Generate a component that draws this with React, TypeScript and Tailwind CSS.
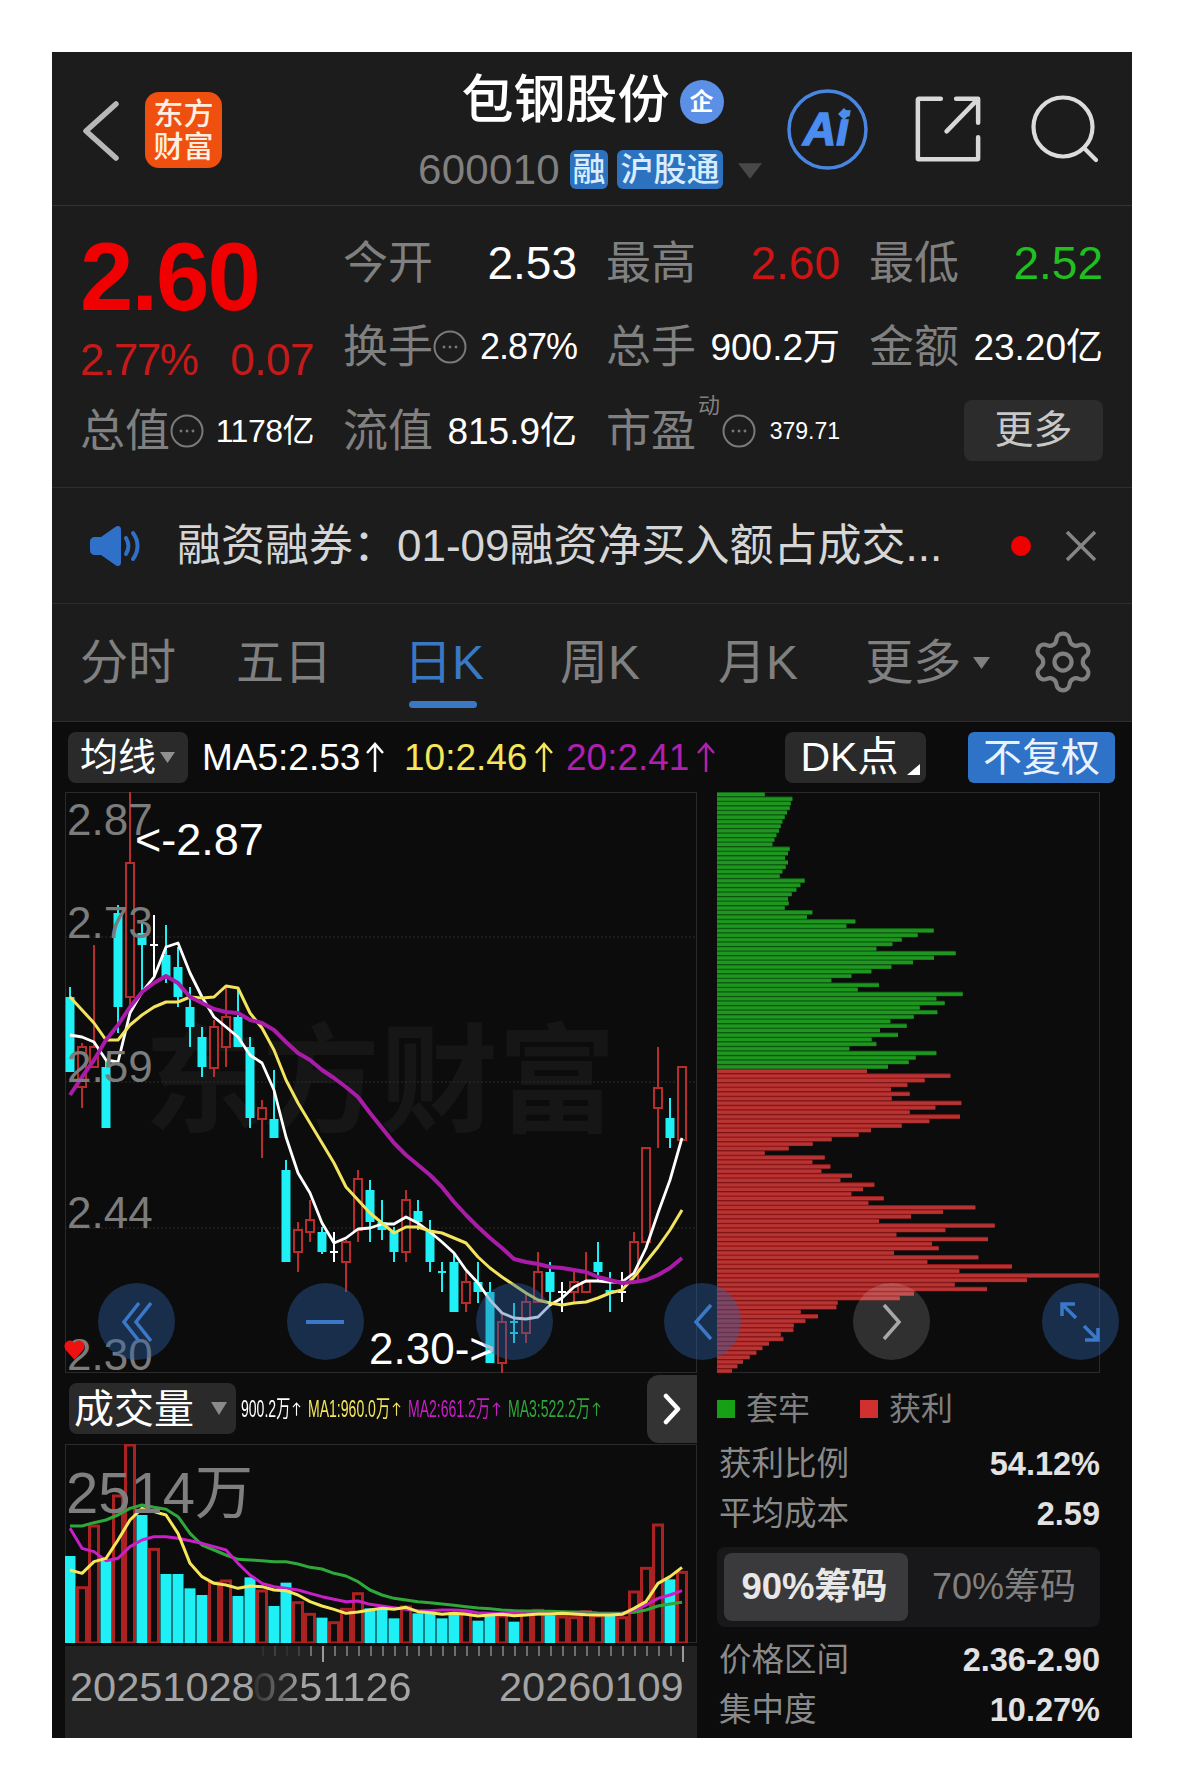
import { Settings } from 'lucide-react'

type Candle = [string, number, number, number, number]

// color, wick top, body top, body bottom, wick bottom (page y). x = 70 + 12 * i
const candles: Candle[] = [
    ['c', 987, 997, 1072, 1072], ['r', 1043, 1047, 1087, 1108], ['r', 945, 1047, 1067, 1067], ['c', 1060, 1067, 1128, 1128],
    ['c', 905, 913, 1007, 1033], ['r', 792, 863, 997, 1013], ['c', 920, 933, 945, 993], ['w', 915, 945, 945, 977],
    ['c', 925, 955, 977, 983], ['c', 947, 967, 997, 1007], ['c', 987, 1007, 1027, 1047], ['c', 1027, 1037, 1067, 1077],
    ['r', 1020, 1027, 1068, 1077], ['r', 987, 1017, 1047, 1067], ['c', 987, 1017, 1047, 1047], ['c', 1037, 1047, 1118, 1128],
    ['r', 1100, 1108, 1119, 1158], ['c', 1070, 1119, 1138, 1138], ['c', 1160, 1170, 1262, 1262], ['r', 1222, 1230, 1252, 1272],
    ['r', 1200, 1220, 1232, 1242], ['c', 1227, 1232, 1252, 1254], ['w', 1232, 1252, 1252, 1262], ['r', 1240, 1242, 1262, 1292],
    ['r', 1170, 1179, 1230, 1242], ['c', 1180, 1190, 1222, 1242], ['c', 1200, 1222, 1230, 1240], ['c', 1227, 1232, 1252, 1262],
    ['r', 1190, 1200, 1252, 1262], ['c', 1200, 1211, 1222, 1230], ['c', 1220, 1230, 1262, 1272], ['d', 1262, 1272, 1272, 1292],
    ['c', 1253, 1262, 1312, 1312], ['r', 1272, 1282, 1303, 1312], ['c', 1262, 1282, 1292, 1303], ['c', 1282, 1292, 1363, 1363],
    ['r', 1312, 1322, 1363, 1373], ['d', 1303, 1322, 1333, 1343], ['r', 1292, 1302, 1333, 1343], ['r', 1252, 1272, 1302, 1302],
    ['c', 1262, 1272, 1292, 1303], ['w', 1282, 1292, 1305, 1312], ['r', 1272, 1282, 1292, 1303], ['r', 1252, 1282, 1292, 1293],
    ['c', 1242, 1262, 1272, 1282], ['c', 1272, 1290, 1293, 1312], ['w', 1272, 1282, 1292, 1302], ['r', 1232, 1242, 1282, 1282],
    ['r', 1148, 1148, 1242, 1242], ['r', 1047, 1088, 1108, 1148], ['c', 1098, 1118, 1138, 1148], ['r', 1067, 1067, 1140, 1140],
]

const ma5 = [1035, 1037, 1042, 1060, 1062, 1013, 992, 977, 947, 943, 973, 997, 1017, 1027, 1037, 1055, 1063, 1090, 1137, 1173, 1193, 1223, 1243, 1238, 1229, 1228, 1224, 1224, 1217, 1223, 1232, 1242, 1253, 1270, 1283, 1300, 1313, 1318, 1319, 1317, 1305, 1298, 1287, 1281, 1281, 1282, 1282, 1273, 1248, 1213, 1180, 1138]
const ma10 = [997, 1010, 1023, 1040, 1040, 1025, 1015, 1007, 1002, 1002, 997, 998, 997, 986, 988, 1013, 1028, 1050, 1080, 1103, 1123, 1143, 1163, 1187, 1200, 1213, 1223, 1233, 1227, 1227, 1231, 1233, 1238, 1243, 1257, 1268, 1277, 1285, 1293, 1300, 1303, 1305, 1303, 1302, 1298, 1293, 1290, 1277, 1262, 1247, 1230, 1210]
const ma20 = [1095, 1077, 1060, 1040, 1025, 1007, 992, 983, 976, 983, 997, 1003, 1009, 1012, 1013, 1020, 1023, 1030, 1042, 1053, 1060, 1070, 1078, 1087, 1097, 1113, 1128, 1143, 1155, 1165, 1175, 1187, 1202, 1215, 1227, 1238, 1248, 1259, 1262, 1264, 1267, 1268, 1270, 1272, 1277, 1280, 1283, 1282, 1280, 1275, 1268, 1258]

// bar tops as read off the volume pane
const volumes: [string, number][] = [
    ['c', 558], ['r', 650], ['r', 465], ['c', 570], ['r', 375], ['r', 222], ['c', 435], ['r', 535], ['c', 612], ['c', 612], ['c', 655], ['c', 675], ['r', 635],
    ['r', 630], ['c', 678], ['c', 622], ['r', 660], ['c', 708], ['c', 638], ['r', 695], ['r', 730], ['c', 743], ['r', 755], ['r', 715], ['r', 668], ['c', 715],
    ['c', 720], ['c', 745], ['r', 708], ['c', 730], ['c', 730], ['c', 745], ['c', 728], ['r', 725], ['c', 752], ['c', 735], ['r', 735], ['c', 755], ['r', 720],
    ['r', 718], ['c', 730], ['r', 738], ['r', 740], ['r', 722], ['r', 735], ['c', 738], ['r', 740], ['r', 663], ['r', 592], ['r', 462], ['c', 628], ['r', 604],
]
const volMa1 = [600, 610, 575, 565, 510, 450, 415, 425, 435, 490, 580, 620, 640, 645, 655, 648, 650, 660, 662, 675, 695, 708, 718, 730, 726, 720, 715, 718, 712, 725, 728, 733, 730, 733, 738, 735, 733, 737, 735, 732, 732, 730, 732, 734, 735, 735, 733, 715, 695, 640, 620, 592]
const volMa2 = [475, 535, 545, 572, 565, 530, 510, 500, 500, 505, 512, 520, 530, 540, 580, 615, 640, 650, 655, 660, 670, 680, 688, 695, 693, 703, 708, 713, 718, 722, 722, 720, 720, 722, 728, 730, 730, 730, 732, 732, 732, 732, 732, 733, 733, 733, 732, 720, 705, 685, 675, 662]
const volMa3 = [468, 468, 458, 450, 435, 415, 405, 412, 418, 440, 490, 525, 540, 555, 568, 570, 572, 575, 575, 582, 592, 597, 610, 618, 635, 660, 675, 685, 690, 695, 698, 702, 706, 710, 714, 716, 720, 722, 724, 724, 724, 725, 726, 727, 729, 730, 729, 727, 720, 708, 702, 697]

const chipGreen = [195, 278, 273, 270, 262, 255, 248, 243, 238, 230, 224, 218, 270, 265, 256, 265, 258, 248, 240, 315, 302, 290, 276, 265, 267, 255, 338, 322, 467, 440, 702, 654, 606, 578, 530, 768, 703, 640, 575, 515, 455, 395, 538, 474, 789, 710, 735, 660, 713, 642, 572, 621, 541, 595, 516, 530, 449, 710, 648, 627, 565]
const chipRed = [502, 752, 675, 623, 574, 630, 576, 785, 707, 630, 781, 689, 606, 514, 477, 396, 339, 267, 195, 375, 338, 392, 365, 457, 422, 524, 490, 455, 552, 506, 827, 730, 634, 538, 885, 737, 590, 865, 697, 717, 583, 836, 683, 937, 779, 1197, 982, 765, 862, 643, 600, 414, 410, 303, 355, 317, 282, 281, 243, 251, 208, 188, 170, 150, 130, 113, 97]

const candleX = (i: number) => 70 + 12 * i
const toPoints = (ys: number[]) => ys.map((y, i) => `${candleX(i)},${y}`).join(' ')
const volY = (v: number) => 1370 + v / 3

function PriceChart() {
    return (
        <svg className="absolute -left-px -top-px h-[581px] w-[632px]" viewBox="65 792 632 581">
            <g stroke="#2c2c2c" strokeWidth="1" strokeDasharray="2 2">
                <line x1="65" x2="697" y1="937" y2="937" />
                <line x1="65" x2="697" y1="1082" y2="1082" />
                <line x1="65" x2="697" y1="1228" y2="1228" />
            </g>
            {candles.map(([c, wt, bt, bb, wb], i) => {
                const x = candleX(i)
                if (c === 'w' || c === 'd') {
                    const color = c === 'w' ? '#ffffff' : '#1ff0f5'
                    return (
                        <g key={i} stroke={color} strokeWidth="2">
                            <line x1={x} x2={x} y1={wt} y2={wb} />
                            <line x1={x - 4} x2={x + 4} y1={bt} y2={bt} />
                            <line x1={x - 4} x2={x + 4} y1={bb} y2={bb} />
                        </g>
                    )
                }
                if (c === 'c') {
                    return (
                        <g key={i}>
                            <line x1={x} x2={x} y1={wt} y2={wb} stroke="#1ff0f5" strokeWidth="2" />
                            <rect x={x - 4.5} y={bt} width="9" height={Math.max(bb - bt, 2)} fill="#1ff0f5" />
                        </g>
                    )
                }
                return (
                    <g key={i}>
                        <line x1={x} x2={x} y1={wt} y2={bt} stroke="#b82c2c" strokeWidth="2" />
                        <line x1={x} x2={x} y1={bb} y2={wb} stroke="#b82c2c" strokeWidth="2" />
                        <rect x={x - 4} y={bt} width="8" height={bb - bt} fill="#0c0c0c" stroke="#b82c2c" strokeWidth="2" />
                    </g>
                )
            })}
            <polyline points={toPoints(ma5)} fill="none" stroke="#ffffff" strokeWidth="2.8" strokeLinejoin="round" />
            <polyline points={toPoints(ma10)} fill="none" stroke="#f2e45f" strokeWidth="3" strokeLinejoin="round" />
            <polyline points={toPoints(ma20)} fill="none" stroke="#a81ca8" strokeWidth="4" strokeLinejoin="round" />
        </svg>
    )
}

function VolumeChart() {
    return (
        <svg className="absolute -left-px -top-px h-[199px] w-[632px]" viewBox="65 1444 632 199">
            {volumes.map(([c, top], i) =>
                c === 'c' ? (
                    <rect key={i} x={candleX(i) - 5.5} y={volY(top)} width="11" height={1643 - volY(top)} fill="#1ff0f5" />
                ) : (
                    <rect key={i} x={candleX(i) - 4.5} y={volY(top) + 1} width="9" height={1642 - volY(top)} fill="#0c0c0c" stroke="#aa2222" strokeWidth="3" />
                ),
            )}
            <polyline points={volMa3.map((v, i) => `${candleX(i)},${volY(v)}`).join(' ')} fill="none" stroke="#2ea83a" strokeWidth="3" strokeLinejoin="round" />
            <polyline points={volMa2.map((v, i) => `${candleX(i)},${volY(v)}`).join(' ')} fill="none" stroke="#c81fc8" strokeWidth="3" strokeLinejoin="round" />
            <polyline points={volMa1.map((v, i) => `${candleX(i)},${volY(v)}`).join(' ')} fill="none" stroke="#f5e65a" strokeWidth="3" strokeLinejoin="round" />
        </svg>
    )
}

function ChipChart() {
    const rows = [...chipGreen, ...chipRed]
    const step = 581 / rows.length
    return (
        <svg className="absolute -left-px -top-px h-[581px] w-[383px]" viewBox="717 792 383 581">
            {rows.map((end, i) => {
                const green = i < chipGreen.length
                const y = 792 + i * step
                const w = (end - 52) / 3
                return (
                    <g key={i}>
                        <rect x="717" y={y} width={w} height={step} fill={green ? '#0e6a12' : '#a01818'} />
                        <rect x="717" y={y + 1} width={w} height={step - 1.4} fill={green ? '#1f961f' : '#b53434'} />
                    </g>
                )
            })}
        </svg>
    )
}

function UpArrow({ className }: { className: string }) {
    return (
        <svg className={className} viewBox="0 0 20 30" fill="none" stroke="currentColor" strokeWidth="2.5">
            <path d="M10 30V2M2 11l8-9 8 9" />
        </svg>
    )
}

function DotCircle() {
    return (
        <svg className="h-[34px] w-[34px]" viewBox="0 0 34 34" fill="none" stroke="#7a7a7a" strokeWidth="2">
            <circle cx="17" cy="17" r="15.5" />
            <circle cx="11" cy="17" r="1.2" fill="#7a7a7a" strokeWidth="0.5" />
            <circle cx="17" cy="17" r="1.2" fill="#7a7a7a" strokeWidth="0.5" />
            <circle cx="23" cy="17" r="1.2" fill="#7a7a7a" strokeWidth="0.5" />
        </svg>
    )
}

function Stat({ label, value, valueClass, icon }: { label: string; value: string; valueClass: string; icon?: boolean }) {
    return (
        <div className="flex items-center justify-between">
            <div className="ml-[-3px] flex items-center">
                <span className="text-[45px] leading-none text-[#808080]">{label}</span>
                {icon && <DotCircle />}
            </div>
            <span className={`leading-none ${valueClass}`}>{value}</span>
        </div>
    )
}

function Circle({ gray, children }: { gray?: boolean; children?: React.ReactNode }) {
    return (
        <div className={`flex h-[77px] w-[77px] items-center justify-center rounded-full ${gray ? 'bg-white/15' : 'bg-[#2a62a8]/40'}`}>
            {children}
        </div>
    )
}

function ChipRow({ label, value }: { label: string; value: string }) {
    return (
        <div className="flex h-[50px] items-center justify-between pl-[2px]">
            <span className="text-[32.5px] leading-none text-[#8a8a8a]">{label}</span>
            <span className="text-[32.5px] font-bold leading-none text-[#e2e2e2]">{value}</span>
        </div>
    )
}

function VolLabel({ text, color, width }: { text: string; color: string; width: string }) {
    return (
        <span className={`flex items-center ${color} ${width}`}>
            <span className="inline-block w-full min-w-0 origin-left scale-x-[0.585] whitespace-nowrap">{text}</span>
            <UpArrow className="h-[22px] w-[9px] shrink-0" />
        </span>
    )
}

export default function App() {
    return (
        <div className="min-h-[1790px] bg-white p-[52px] font-['Liberation_Sans','Noto_Sans_CJK_SC',sans-serif]">
            <div className="flex h-[1686px] w-[1080px] flex-col overflow-hidden bg-[#1c1c1c]">
                {/* Header */}
                <div className="flex h-[154px] shrink-0 border-b border-[#333] pl-[31px]">
                    <svg className="mt-[49px] h-[60px] w-[37px]" viewBox="0 0 37 60" fill="none" stroke="#b8b8b8" strokeWidth="5.500" strokeLinecap="round" strokeLinejoin="round">
                        <path d="M33 3 3 30l30 27" />
                    </svg>
                    <div className="ml-[25px] mt-[40px] flex h-[76px] w-[77px] flex-col items-center justify-center rounded-[14px] bg-[#f0500f] text-[30px] font-medium leading-[33px] text-[#ffeee2]">
                        <span>东方</span>
                        <span>财富</span>
                    </div>
                    <div className="ml-[196px] flex w-[344px] flex-col items-center pt-[23px]">
                        <div className="flex h-[50px] items-center pl-[5px]">
                            <span className="text-[52px] font-medium leading-none text-white">包钢股份</span>
                            <div className="ml-[10px] mt-[4px] flex h-[44px] w-[44px] items-center justify-center rounded-full bg-[#5c8fe6] text-[24px] font-bold text-white">企</div>
                        </div>
                        <div className="mt-[25px] flex h-[39px] items-center self-start">
                            <span className="text-[42px] leading-none tracking-[0.3px] text-[#808080]">600010</span>
                            <span className="ml-[10px] flex h-[39px] w-[38px] items-center justify-center rounded-[6px] bg-[#2c72bf] text-[33px] font-medium text-[#d8ecff]">融</span>
                            <span className="ml-[9px] flex h-[39px] w-[106px] items-center justify-center rounded-[6px] bg-[#2c72bf] text-[33px] font-medium text-[#d8ecff]">沪股通</span>
                            <svg className="ml-[15px] mt-[2px] h-[16px] w-[24px]" viewBox="0 0 25 16">
                                <path d="M0 0h25L12.500 16z" fill="#484848" />
                            </svg>
                        </div>
                    </div>
                    <svg className="ml-[25px] mt-[37px] h-[81px] w-[81px]" viewBox="0 0 81 81">
                        <circle cx="40.500" cy="40.500" r="38.500" fill="none" stroke="#4a86e0" strokeWidth="3.500" />
                        <text x="39" y="56" textAnchor="middle" fill="#4a8cf0" stroke="#4a8cf0" strokeWidth="1.500" fontSize="46" fontWeight="700" fontStyle="italic" fontFamily="Liberation Sans">Ai</text>
                        <path d="M57 19l6 6-6 6-6-6z" fill="#4a8cf0" />
                    </svg>
                    <svg className="ml-[47px] mt-[44px] h-[66px] w-[66px]" viewBox="0 0 69 69" fill="none" stroke="#d8d8d8" strokeWidth="4.700" strokeLinecap="round" strokeLinejoin="round">
                        <path d="M27 3H4a1 1 0 0 0-1 1v61a1 1 0 0 0 1 1h61a1 1 0 0 0 1-1V43" />
                        <path d="M43 3h23v25M65 4 33 37" />
                    </svg>
                    <svg className="ml-[50px] mt-[43px] h-[68px] w-[68px]" viewBox="0 0 68 68" fill="none" stroke="#dcdcdc" strokeWidth="4.200" strokeLinecap="round">
                        <circle cx="32" cy="32" r="29.500" />
                        <path d="m54 54 11 11" />
                    </svg>
                </div>

                {/* Quote */}
                <div className="grid h-[282px] shrink-0 grid-cols-[231px_231px_231px_231px] grid-rows-[84px_84px_84px] content-start gap-x-[32px] border-b border-[#2e2e2e] pl-[31px] pt-[15px]">
                    <div className="ml-[-3px] mt-[28px] flex items-center text-[96px] font-bold leading-none tracking-[-2px] text-[#f00000]">2.60</div>
                    <Stat label="今开" value="2.53" valueClass="text-[46px] text-white" />
                    <Stat label="最高" value="2.60" valueClass="text-[46px] text-[#d01414]" />
                    <Stat label="最低" value="2.52" valueClass="text-[46px] text-[#1fc01f]" />

                    <div className="mt-[26px] flex items-center justify-between text-[44px] leading-none text-[#c51a1a]">
                        <span className="ml-[-3px] tracking-[-1.5px]">2.77%</span>
                        <span className="tracking-[-0.5px]">0.07</span>
                    </div>
                    <Stat label="换手" icon value="2.87%" valueClass="text-[36px] tracking-[-1px] text-white" />
                    <Stat label="总手" value="900.2万" valueClass="text-[37px] text-white" />
                    <Stat label="金额" value="23.20亿" valueClass="text-[37px] text-white" />

                    <Stat label="总值" icon value="1178亿" valueClass="text-[32px] tracking-[-0.5px] text-white" />
                    <Stat label="流值" value="815.9亿" valueClass="text-[37px] text-white" />
                    <div className="flex items-center justify-between">
                        <div className="relative ml-[-3px] flex items-center">
                            <span className="text-[45px] leading-none text-[#808080]">市盈</span>
                            <span className="absolute left-[92px] top-[-14px] text-[22px] leading-none text-[#808080]">动</span>
                            <span className="ml-[26px]"><DotCircle /></span>
                        </div>
                        <span className="text-[23px] leading-none text-white">379.71</span>
                    </div>
                    <div className="flex items-center justify-end">
                        <div className="mt-[-2px] flex h-[61px] w-[139px] items-center justify-center rounded-[8px] bg-[#2c2c2c] text-[39px] text-[#c8c8c8]">更多</div>
                    </div>
                </div>

                {/* Ticker */}
                <div className="flex h-[116px] shrink-0 items-center border-b border-[#2e2e2e] pl-[38px]">
                    <svg className="h-[42px] w-[50px]" viewBox="0 0 50 42" fill="none">
                        <path d="M5 12h6L26 1.500c2-1.300 5-.5 5 3v33c0 3.500-3 4.300-5 3L11 30H5c-3 0-5-2-5-5v-8c0-3 2-5 5-5z" fill="#2f70c8" />
                        <path d="M36 13c3 5 3 11 0 16M43 8c6 8 6 18 0 26" stroke="#2f70c8" strokeWidth="4" strokeLinecap="round" />
                    </svg>
                    <span className="ml-[37px] w-[766px] whitespace-nowrap text-[44px] leading-none text-[#d6d6d6]">融资融券：01-09融资净买入额占成交...</span>
                    <span className="ml-[68px] h-[20px] w-[20px] rounded-full bg-[#f00000]" />
                    <svg className="ml-[34px] h-[32px] w-[32px]" viewBox="0 0 32 32" stroke="#858585" strokeWidth="3.500">
                        <path d="m2 2 28 28M30 2 2 30" />
                    </svg>
                </div>

                {/* Tabs */}
                <div className="flex h-[118px] shrink-0 items-center border-b border-[#2e2e2e] pl-[28px] text-[48px] leading-none text-[#808080]">
                    <span>分时</span>
                    <span className="ml-[60px]">五日</span>
                    <span className="relative ml-[72px] text-[#3a78c4]">
                        日K
                        <span className="absolute left-[5px] top-[62px] h-[7px] w-[68px] rounded-full bg-[#3a78c4]" />
                    </span>
                    <span className="ml-[76px]">周K</span>
                    <span className="ml-[78px]">月K</span>
                    <span className="ml-[67px]">更多</span>
                    <svg className="ml-[12px] h-[12px] w-[17px]" viewBox="0 0 17 12">
                        <path d="M0 0h17L8.500 12z" fill="#808080" />
                    </svg>
                    <Settings className="ml-[39px] mt-[-2px] h-[68px] w-[68px]" strokeWidth={1.5} color="#808080" />
                </div>

                {/* Chart area */}
                <div className="relative flex min-h-0 flex-1 flex-col bg-[#0c0c0c]">
                    <div className="flex h-[70px] shrink-0 items-center pl-[16px]">
                        <div className="flex h-[51px] w-[120px] items-center rounded-[8px] bg-[#2a2a2a] pl-[12px] text-[38px] leading-none text-white">
                            均线
                            <svg className="ml-[4px] h-[11px] w-[15px]" viewBox="0 0 15 11">
                                <path d="M0 0h15L7.500 11z" fill="#909090" />
                            </svg>
                        </div>
                        <div className="ml-[14px] flex w-[583px] items-center text-[37px] leading-none">
                            <span className="flex w-[202px] items-center whitespace-nowrap text-white">MA5:2.53<UpArrow className="ml-[4px] h-[30px] w-[22px]" /></span>
                            <span className="flex w-[162px] items-center whitespace-nowrap text-[#f5e65a]">10:2.46<UpArrow className="ml-[6px] h-[30px] w-[22px]" /></span>
                            <span className="flex items-center whitespace-nowrap text-[#b020b0]">20:2.41<UpArrow className="ml-[6px] h-[30px] w-[22px]" /></span>
                        </div>
                        <div className="relative flex h-[51px] w-[141px] items-center justify-center rounded-[8px] bg-[#2a2a2a] pr-[12px] text-[41px] leading-none text-white">
                            DK点
                            <svg className="absolute bottom-[8px] right-[6px] h-[11px] w-[13px]" viewBox="0 0 13 11">
                                <path d="M13 0v11H0z" fill="#fff" />
                            </svg>
                        </div>
                        <div className="ml-[42px] flex h-[51px] w-[147px] items-center justify-center rounded-[6px] bg-[#2f73c8] text-[39px] leading-none text-[#eaf2ff]">不复权</div>
                    </div>

                    <div className="flex">
                        {/* Left column */}
                        <div className="ml-[13px] w-[632px] shrink-0">
                            <div className="relative h-[581px] border border-[#2a2a2a]">
                                <span className="absolute left-[78px] top-[230px] whitespace-nowrap text-[118px] font-bold leading-none text-[#161616]">东方财富</span>
                                <PriceChart />
                                <span className="absolute left-[1px] top-[5px] text-[44px] leading-none text-[#7c7c7c]">2.87</span>
                                <span className="absolute left-[1px] top-[108px] text-[44px] leading-none text-[#7c7c7c]">2.73</span>
                                <span className="absolute left-[1px] top-[252px] text-[44px] leading-none text-[#7c7c7c]">2.59</span>
                                <span className="absolute left-[1px] top-[398px] text-[44px] leading-none text-[#7c7c7c]">2.44</span>
                                <span className="absolute left-[1px] top-[540px] text-[44px] leading-none text-[#7c7c7c]">2.30</span>
                                <span className="absolute left-[69px] top-[24px] text-[45px] leading-none text-white">&lt;-2.87</span>
                                <span className="absolute left-[303px] top-[534px] text-[44px] leading-none text-white">2.30-&gt;</span>
                                <svg className="absolute left-[-2px] top-[547px] h-[20px] w-[21px]" viewBox="0 0 24 22">
                                    <path d="M12 22 2 11C-2 5 3 0 7 0c2 0 4 1 5 3 1-2 3-3 5-3 4 0 9 5 5 11z" fill="#f01010" />
                                </svg>
                            </div>

                            <div className="flex h-[71px] items-center">
                                <div className="ml-[4px] flex h-[51px] w-[167px] items-center rounded-[8px] bg-[#2a2a2a] pl-[5px] text-[40px] leading-none text-white">
                                    成交量
                                    <svg className="ml-[17px] h-[13px] w-[16px]" viewBox="0 0 16 13">
                                        <path d="M0 0h16L8 13z" fill="#8a8a8a" />
                                    </svg>
                                </div>
                                <div className="ml-[5px] flex w-[365px] gap-x-[7px] text-[24px] leading-none">
                                    <VolLabel text="900.2万" color="text-white" width="w-[60px]" />
                                    <VolLabel text="MA1:960.0万" color="text-[#f5e65a]" width="w-[93px]" />
                                    <VolLabel text="MA2:661.2万" color="text-[#c81fc8]" width="w-[93px]" />
                                    <VolLabel text="MA3:522.2万" color="text-[#2ea83a]" width="w-[93px]" />
                                </div>
                                <div className="ml-auto flex h-[68px] w-[50px] items-center justify-center rounded-l-[12px] bg-[#333]">
                                    <svg className="h-[32px] w-[18px]" viewBox="0 0 18 32" fill="none" stroke="#fff" strokeWidth="4.500" strokeLinecap="round" strokeLinejoin="round">
                                        <path d="m3 3 12 13L3 29" />
                                    </svg>
                                </div>
                            </div>

                            <div className="relative h-[199px] border border-[#2a2a2a]">
                                <VolumeChart />
                                <span className="absolute left-[0px] top-[19px] text-[58px] leading-none text-[#7f7f7f]">2514万</span>
                            </div>

                            <div className="relative mt-[3px] h-[92px] bg-[#222]">
                                <div className="flex h-[16px] items-start pl-[197px]">
                                    {Array.from({ length: 36 }, (_, i) => (
                                        <span key={i} className={`mr-[10px] w-[2px] ${i === 0 || i === 2 ? 'bg-[#2f2f2f]' : i === 1 || i === 3 ? 'bg-[#3e3e3e]' : 'bg-[#6e6e6e]'} ${i === 5 || i === 35 ? 'h-[16px] bg-[#9a9a9a]' : 'h-[10px]'}`} />
                                    ))}
                                </div>
                                <span className="absolute left-[5px] top-[20px] text-[41.500px] leading-none text-[#a4a4a4]">20251028</span>
                                <span className="absolute left-[165px] top-[20px] bg-gradient-to-r from-transparent from-[10%] to-[#a4a4a4] to-[40%] bg-clip-text text-[41.500px] leading-none text-transparent">20251126</span>
                                <span className="absolute left-[434px] top-[20px] text-[41.500px] leading-none text-[#a4a4a4]">20260109</span>
                            </div>
                        </div>

                        {/* Right column */}
                        <div className="ml-[20px] w-[383px] shrink-0">
                            <div className="relative h-[581px] border border-[#2a2a2a]">
                                <ChipChart />
                            </div>
                            <div className="mt-[22px] flex h-[28px] items-center text-[32px] leading-none text-[#808080]">
                                <span className="h-[18px] w-[18px] bg-[#16a016]" />
                                <span className="ml-[11px]">套牢</span>
                                <span className="ml-[50px] h-[18px] w-[18px] bg-[#d03030]" />
                                <span className="ml-[11px]">获利</span>
                            </div>
                            <div className="mt-[16px]">
                                <ChipRow label="获利比例" value="54.12%" />
                                <ChipRow label="平均成本" value="2.59" />
                            </div>
                            <div className="mt-[8px] flex h-[80px] items-center rounded-[8px] bg-[#18181a] pl-[7px]">
                                <div className="flex h-[68px] w-[184px] items-center justify-center rounded-[8px] bg-[#3a3a3c] pr-[3px] text-[36.500px] font-bold leading-none text-[#e8e8e8]">90%筹码</div>
                                <div className="flex flex-1 items-center justify-center text-[36px] leading-none text-[#808080]">70%筹码</div>
                            </div>
                            <div className="mt-[8px]">
                                <ChipRow label="价格区间" value="2.36-2.90" />
                                <ChipRow label="集中度" value="10.27%" />
                            </div>
                        </div>
                    </div>

                    {/* Floating chart controls */}
                    <div className="absolute left-[46px] right-[13px] top-[561px] flex justify-between">
                        <Circle>
                            <svg className="h-[42px] w-[32px]" viewBox="0 0 32 42" fill="none" stroke="#3b78c8" strokeWidth="3.500"><path d="M18 2 3 21l15 19M30 2 15 21l15 19" /></svg>
                        </Circle>
                        <Circle>
                            <span className="h-[4px] w-[38px] bg-[#3b78c8]" />
                        </Circle>
                        <Circle />
                        <Circle>
                            <svg className="h-[38px] w-[20px]" viewBox="0 0 20 38" fill="none" stroke="#3b78c8" strokeWidth="3.500"><path d="M18 2 3 19l15 17" /></svg>
                        </Circle>
                        <Circle gray>
                            <svg className="h-[38px] w-[20px]" viewBox="0 0 20 38" fill="none" stroke="#a8a8a8" strokeWidth="3.500"><path d="m2 2 15 17L2 36" /></svg>
                        </Circle>
                        <Circle>
                            <svg className="h-[40px] w-[40px]" viewBox="0 0 40 40" fill="none" stroke="#3b78c8" strokeWidth="3.500"><path d="M2 14V2h13M3 3l13 13M38 26v12H25M37 37 24 24" /></svg>
                        </Circle>
                    </div>
                </div>
            </div>
        </div>
    )
}
